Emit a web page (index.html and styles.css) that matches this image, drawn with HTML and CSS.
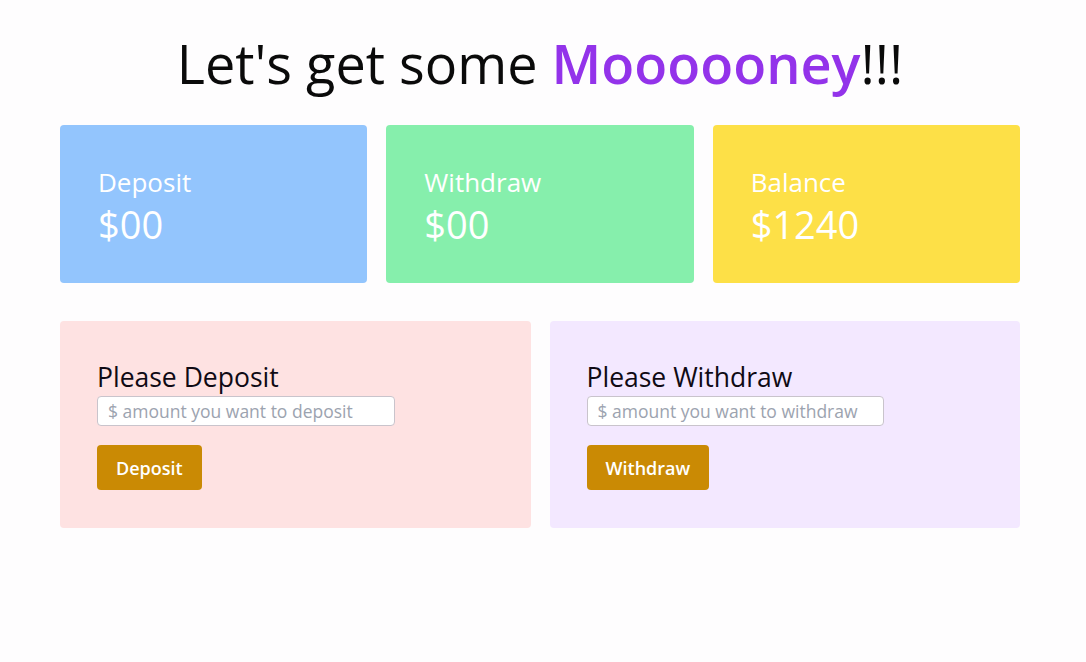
FILE: index.html
```html
<!DOCTYPE html>
<html>
<head>
<meta charset="utf-8">
<link rel="stylesheet" href="styles.css">
</head>
<body>
<div class="page">
  <h1 class="title">Let's get some <span class="money">Moooooney</span>!!!</h1>
  <div class="stats">
    <div class="stat stat-blue">
      <div class="stat-label">Deposit</div>
      <div class="stat-value">$00</div>
    </div>
    <div class="stat stat-green">
      <div class="stat-label">Withdraw</div>
      <div class="stat-value">$00</div>
    </div>
    <div class="stat stat-yellow">
      <div class="stat-label">Balance</div>
      <div class="stat-value">$1240</div>
    </div>
  </div>
  <div class="forms">
    <div class="panel panel-pink">
      <div class="panel-title">Please Deposit</div>
      <input class="amount amount-deposit" type="text" placeholder="$ amount you want to deposit">
      <button class="btn">Deposit</button>
    </div>
    <div class="panel panel-purple">
      <div class="panel-title">Please Withdraw</div>
      <input class="amount amount-withdraw" type="text" placeholder="$ amount you want to withdraw">
      <button class="btn">Withdraw</button>
    </div>
  </div>
</div>
</body>
</html>
```

FILE: styles.css
```css
* { box-sizing: border-box; }
html, body {
  margin: 0;
  padding: 0;
  background: #fefdfe;
}
body {
  font-family: "Open Sans", "Noto Sans", sans-serif;
  color: #111;
}
.page {
  width: 960px;
  margin-left: 60px;
  padding-top: 28px;
}
.title {
  margin: 0;
  text-align: center;
  font-weight: 400;
  font-size: 54px;
  line-height: 70px;
  color: #0a0a0a;
}
.money {
  color: #9333ea;
  font-weight: 600;
}
.stats {
  margin-top: 27px;
  display: grid;
  grid-template-columns: repeat(3, 1fr);
  gap: 19px;
}
.stat {
  height: 158px;
  border-radius: 4px;
  padding: 40px 38px;
  color: #fff;
}
.stat-blue { background: #93c5fd; }
.stat-green { background: #86efac; }
.stat-yellow { background: #fde047; }
.stat-label {
  font-size: 26px;
  line-height: 34px;
  font-weight: 400;
}
.stat-value {
  font-size: 38px;
  line-height: 50px;
}
.forms {
  margin-top: 38px;
  display: grid;
  grid-template-columns: 1fr 1fr;
  gap: 19px;
}
.panel {
  height: 207px;
  border-radius: 4px;
  padding: 38px 37px;
  display: flex;
  flex-direction: column;
  align-items: flex-start;
}
.panel-pink { background: #fee2e2; }
.panel-purple { background: #f3e8ff; }
.panel-title {
  font-size: 26.5px;
  line-height: 37px;
  color: #0f0a14;
}
.amount {
  height: 31px;
  border: 1px solid #c9c4cc;
  border-radius: 4px;
  background: #fff;
  padding: 0 10px;
  font-family: inherit;
  font-size: 17.5px;
  color: #333;
  outline: none;
}
.amount::placeholder { color: #9ca3af; }
.amount-deposit { width: 298px; }
.amount-withdraw { width: 297px; }
.btn {
  margin-top: 19px;
  height: 46px;
  padding: 0 19px;
  border: none;
  border-radius: 4px;
  background: #ca8a04;
  color: #fff;
  font-family: inherit;
  font-size: 18px;
  font-weight: 600;
}
```
